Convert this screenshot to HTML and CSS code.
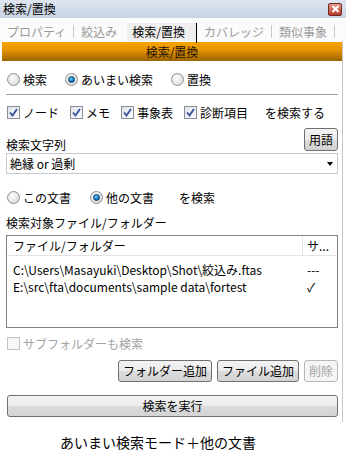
FILE: index.html
```html
<!DOCTYPE html>
<html lang="ja">
<head>
    <meta charset="UTF-8">
    <title>検索/置換</title>
    <link rel="stylesheet" href="styles.css">
</head>
<body>
    <div class="titlebar">
        <span>検索/置換</span>
        <span class="close">
            <svg width="9" height="8" viewBox="0 0 9 8"><path d="M1.5 1 L7.5 7 M7.5 1 L1.5 7" stroke="#fff" stroke-width="2"/></svg>
        </span>
    </div>
    <div class="tabs">
        <span class="tab">プロパティ</span><span class="sep"></span>
        <span class="tab">絞込み</span>
        <span class="tab active">検索/置換</span><span class="sep dark"></span>
        <span class="tab">カバレッジ</span><span class="sep"></span>
        <span class="tab">類似事象</span><span class="sep"></span>
    </div>
    <div class="panel">
        <div class="header">検索/置換</div>
        <div class="content">
            <div class="line mode-row">
                <span class="opt"><span class="radio"></span>検索</span>
                <span class="opt"><span class="radio on"></span>あいまい検索</span>
                <span class="opt"><span class="radio"></span>置換</span>
            </div>
            <div class="rule"></div>
            <div class="line check-row">
                <span class="chk"><span class="box"><svg width="11" height="11" viewBox="0 0 11 11"><path d="M2 5.5 L4.5 8.5 L9 2" fill="none" stroke="#34509a" stroke-width="1.8"/></svg></span>ノード</span>
                <span class="chk"><span class="box"><svg width="11" height="11" viewBox="0 0 11 11"><path d="M2 5.5 L4.5 8.5 L9 2" fill="none" stroke="#34509a" stroke-width="1.8"/></svg></span>メモ</span>
                <span class="chk"><span class="box"><svg width="11" height="11" viewBox="0 0 11 11"><path d="M2 5.5 L4.5 8.5 L9 2" fill="none" stroke="#34509a" stroke-width="1.8"/></svg></span>事象表</span>
                <span class="chk"><span class="box"><svg width="11" height="11" viewBox="0 0 11 11"><path d="M2 5.5 L4.5 8.5 L9 2" fill="none" stroke="#34509a" stroke-width="1.8"/></svg></span>診断項目</span>
                <span class="suffix">を検索する</span>
            </div>
            <div class="term-row">
                <span class="label">検索文字列</span>
                <span class="btn small">用語</span>
            </div>
            <div class="combo">
                <span>絶縁 or 過剰</span>
                <span class="arrow"></span>
            </div>
            <div class="line doc-row">
                <span class="opt"><span class="radio"></span>この文書</span>
                <span class="opt"><span class="radio on"></span>他の文書</span>
                <span class="suffix">を検索</span>
            </div>
            <div class="label list-label">検索対象ファイル/フォルダー</div>
            <div class="list">
                <div class="list-head">
                    <span class="col-path">ファイル/フォルダー</span>
                    <span class="col-sub">サ...</span>
                </div>
                <div class="list-row">
                    <span class="col-path">C:\Users\Masayuki\Desktop\Shot\絞込み.ftas</span>
                    <span class="col-sub">---</span>
                </div>
                <div class="list-row">
                    <span class="col-path">E:\src\fta\documents\sample data\fortest</span>
                    <span class="col-sub tick">✓</span>
                </div>
            </div>
            <div class="line sub-row">
                <span class="chk disabled"><span class="box"></span>サブフォルダーも検索</span>
            </div>
            <div class="btn-row">
                <span class="btn">フォルダー追加</span>
                <span class="btn">ファイル追加</span>
                <span class="btn disabled">削除</span>
            </div>
            <div class="btn run">検索を実行</div>
        </div>
    </div>
    <div class="caption">あいまい検索モード＋他の文書</div>
</body>
</html>
```
FILE: styles.css
```css
/* base */
body {
    margin: 0;
    width: 346px;
    background: #fff;
    color: #000;
    font-family: "Noto Sans CJK JP", sans-serif;
    font-size: 12px;
}

/* window title */
.titlebar {
    height: 18px;
    padding: 0 4px 0 3px;
    display: flex;
    align-items: center;
    justify-content: space-between;
    background: linear-gradient(#dfe6f0, #c9d4e3);
    line-height: 18px;
}

.close {
    width: 12px;
    height: 11px;
    border: 1px solid #6e2a22;
    border-radius: 2px;
    background: linear-gradient(#e49a8c, #b9392a);
    display: flex;
    align-items: center;
    justify-content: center;
}

/* tab strip */
.tabs {
    height: 19px;
    padding-top: 4px;
    display: flex;
    align-items: center;
    background: #fbfbfb;
}

.tab {
    padding: 0 7px;
    height: 18px;
    line-height: 18px;
    color: #9a9a9a;
}

.tab.active {
    margin-left: 3px;
    padding: 0 11px 0 5px;
    background: #efefef;
    color: #000;
}

.sep {
    width: 1px;
    height: 13px;
    background: #c8c8c8;
}

.sep.dark {
    height: 20px;
    margin-top: 2px;
    background: #000;
}

/* panel */
.panel {
    width: 342px;
    border-right: 1px solid #c6c6c6;
    padding-top: 1px;
    padding-bottom: 5px;
}

.header {
    margin-left: 2px;
    height: 19px;
    line-height: 19px;
    text-align: center;
    color: #1c1200;
    background: linear-gradient(#f6a400, #e89400 40%, #9a6400);
}

.content {
    padding: 0 4px 0 6px;
}

.line {
    height: 18px;
    display: flex;
    align-items: center;
}

.mode-row {
    margin-top: 9px;
    gap: 17px;
}

.doc-row {
    margin-top: 14px;
    gap: 18px;
}

.opt, .chk {
    display: flex;
    align-items: center;
    gap: 3px;
}

.radio {
    width: 11px;
    height: 11px;
    margin-left: 1px;
    border: 1px solid #8c8e90;
    border-radius: 50%;
    background: radial-gradient(circle at 40% 35%, #fdfdfd, #d2d2d2);
    display: flex;
    align-items: center;
    justify-content: center;
}

.radio.on::after {
    content: "";
    width: 5px;
    height: 5px;
    border: 1px solid #0c3e6e;
    border-radius: 50%;
    background: radial-gradient(circle at 40% 35%, #6fd0ff, #1175c2 60%, #0a4a86);
}

.rule {
    margin-top: 6px;
    height: 1px;
    background: #a4a4a4;
}

.check-row {
    margin-top: 8px;
    gap: 10px;
}

.box {
    width: 11px;
    height: 11px;
    margin-left: 1px;
    border: 1px solid #8a8e96;
    background: linear-gradient(135deg, #dfe3ea, #fafbfc);
    display: flex;
    align-items: center;
    justify-content: center;
}

.suffix {
    margin-left: 7px;
}

/* search string */
.term-row {
    margin-top: 7px;
    height: 23px;
    display: flex;
    align-items: flex-end;
    justify-content: space-between;
}

.label {
    line-height: 14px;
}

.term-row .label {
    margin-bottom: -1px;
}

.combo {
    margin-top: 2px;
    height: 19px;
    padding: 0 4px 0 3px;
    border: 1px solid #c4c9d2;
    display: flex;
    align-items: center;
    justify-content: space-between;
}

.arrow {
    width: 0;
    height: 0;
    border-left: 3px solid transparent;
    border-right: 3px solid transparent;
    border-top: 4px solid #000;
}

/* file list */
.list-label {
    margin-top: 9px;
    line-height: 16px;
}

.list {
    margin-top: 4px;
    height: 91px;
    border: 1px solid #7f8187;
}

.list-head {
    height: 19px;
    display: flex;
    align-items: center;
    border-bottom: 1px solid #e3e3e3;
    margin-bottom: 5px;
}

.list-head .col-sub {
    align-self: stretch;
    display: flex;
    align-items: center;
    border-left: 1px solid #e3e3e3;
    padding-left: 4px;
}

.list-row {
    height: 17px;
    display: flex;
    align-items: center;
}

.col-path {
    flex: 1;
    padding-left: 6px;
}

.col-sub {
    width: 30px;
    padding-left: 5px;
}

.list-row .col-sub {
    padding-left: 6px;
}

.tick {
    padding-left: 9px !important;
}

.sub-row {
    margin-top: 6px;
}

.chk.disabled {
    color: #a2a2a2;
}

.chk.disabled .box {
    border-color: #c2c2c2;
    background: #f7f7f7;
}

/* buttons */
.btn-row {
    margin-top: 8px;
    display: flex;
    justify-content: flex-end;
    gap: 5px;
}

.btn {
    height: 20px;
    padding: 0 4px;
    line-height: 20px;
    text-align: center;
    border: 1px solid #707070;
    border-radius: 3px;
    background: linear-gradient(#f3f3f3, #ebebeb 50%, #dcdcdc 51%, #d3d3d3);
}

.btn.small {
    height: 21px;
    line-height: 21px;
}

.btn.disabled {
    border-color: #b5b9bc;
    color: #a4a4a4;
    background: #f5f5f5;
}

.run {
    margin: 13px 0 0 1px;
}

.caption {
    margin-top: 10px;
    padding-left: 60px;
    font-size: 14px;
    line-height: 20px;
}
```
